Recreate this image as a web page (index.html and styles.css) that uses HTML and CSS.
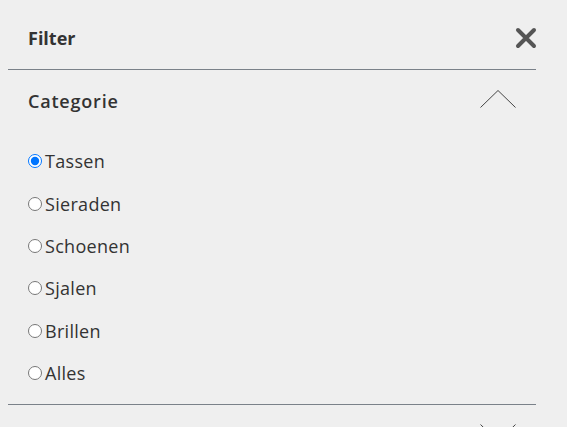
FILE: index.html
```html
<!DOCTYPE html>
<html lang="nl">
<head>
<meta charset="utf-8">
<title>Filter</title>
<link rel="stylesheet" href="styles.css">
</head>
<body>
<div class="panel">
  <div class="panel-head">
    <span class="panel-title">Filter</span>
    <svg class="close" width="22" height="22" viewBox="0 0 22 22" aria-label="Sluiten">
      <path d="M3 3 L19 19 M19 3 L3 19" stroke="#555" stroke-width="4" stroke-linecap="round" fill="none"/>
    </svg>
  </div>
  <div class="section">
    <div class="section-head">
      <span class="section-title">Categorie</span>
      <svg class="chevron" width="36" height="18" viewBox="0 0 36 18">
        <path d="M0.5 17.5 L18 0.5 L35.5 17.5" stroke="#444" stroke-width="1" fill="none"/>
      </svg>
    </div>
    <div class="options">
      <label class="option"><input type="radio" name="cat" checked>Tassen</label>
      <label class="option"><input type="radio" name="cat">Sieraden</label>
      <label class="option"><input type="radio" name="cat">Schoenen</label>
      <label class="option"><input type="radio" name="cat">Sjalen</label>
      <label class="option"><input type="radio" name="cat">Brillen</label>
      <label class="option"><input type="radio" name="cat">Alles</label>
    </div>
  </div>
  <div class="section section-collapsed">
    <div class="section-head section-head-end">
      <svg class="chevron" width="36" height="18" viewBox="0 0 36 18">
        <path d="M0.5 0.5 L18 17.5 L35.5 0.5" stroke="#444" stroke-width="1" fill="none"/>
      </svg>
    </div>
  </div>
</div>
</body>
</html>
```
FILE: styles.css
```css
html, body {
  margin: 0;
  padding: 0;
  background: #efefef;
  overflow: hidden;
}
body {
  font-family: "Open Sans", "Liberation Sans", sans-serif;
  color: #333;
  height: 427px;
}
.panel {
  margin-left: 8px;
  width: 528px;
}
.panel-head {
  height: 70px;
  box-sizing: border-box;
  border-bottom: 1px solid #7a8189;
  display: flex;
  align-items: center;
  justify-content: space-between;
  padding: 7px 0 0 20px;
}
.panel-title {
  font-size: 18px;
  font-weight: 700;
}
.close {
  margin-right: -1px;
}
.section {
  border-bottom: 1px solid #7a8189;
}
.section-collapsed {
  border-bottom: 0;
}
.section-head {
  height: 62px;
  display: flex;
  align-items: center;
  justify-content: space-between;
  padding: 0 20px;
}
.section-head-end {
  justify-content: flex-end;
  align-items: flex-start;
  padding-top: 19px;
  box-sizing: border-box;
}
.section-title {
  font-size: 18px;
  font-weight: 600;
  letter-spacing: 0.8px;
}
.chevron {
  margin-bottom: 4px;
}
.options {
  display: flex;
  flex-direction: column;
  padding: 8px 0 10px 20px;
}
.option {
  height: 42.4px;
  display: flex;
  align-items: center;
  font-size: 18px;
  letter-spacing: 0.3px;
}
.option input {
  width: 14px;
  height: 14px;
  margin: 0 3px 0 0;
}
```
